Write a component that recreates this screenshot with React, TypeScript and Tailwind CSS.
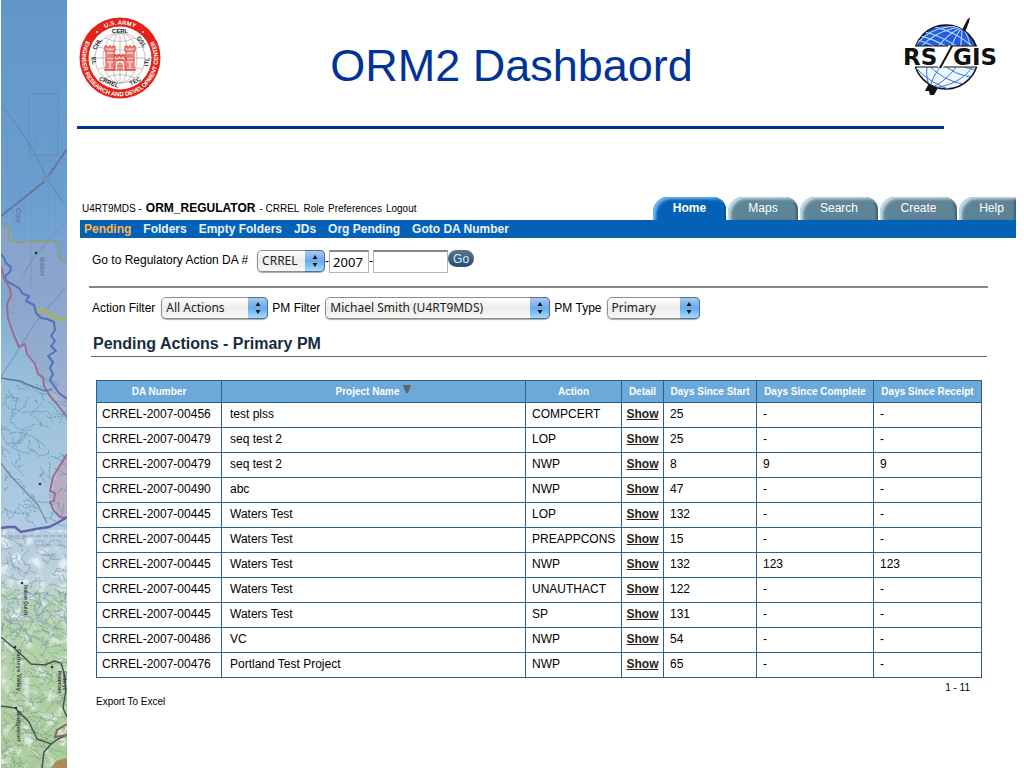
import { useState } from "react";
import type { ReactNode } from "react";
import { clsx } from "clsx";

const TABS = [
  { label: "Home", width: "w-[73px]" },
  { label: "Maps", width: "w-[70px]" },
  { label: "Search", width: "w-[78px]" },
  { label: "Create", width: "w-[77px]" },
  { label: "Help", width: "w-[57px]" },
];

const NAV = ["Pending", "Folders", "Empty Folders", "JDs", "Org Pending", "Goto DA Number"];

const COLUMNS = [
  { label: "DA Number", width: "w-[125px]" },
  { label: "Project Name", width: "w-auto", sorted: true },
  { label: "Action", width: "w-[96px]" },
  { label: "Detail", width: "w-[42px]" },
  { label: "Days Since Start", width: "w-[93px]" },
  { label: "Days Since Complete", width: "w-[117px]" },
  { label: "Days Since Receipt", width: "w-[108px]" },
];

// da number, project, action, days since start / complete / receipt
const ROWS = [
  ["CRREL-2007-00456", "test plss", "COMPCERT", "25", "-", "-"],
  ["CRREL-2007-00479", "seq test 2", "LOP", "25", "-", "-"],
  ["CRREL-2007-00479", "seq test 2", "NWP", "8", "9", "9"],
  ["CRREL-2007-00490", "abc", "NWP", "47", "-", "-"],
  ["CRREL-2007-00445", "Waters Test", "LOP", "132", "-", "-"],
  ["CRREL-2007-00445", "Waters Test", "PREAPPCONS", "15", "-", "-"],
  ["CRREL-2007-00445", "Waters Test", "NWP", "132", "123", "123"],
  ["CRREL-2007-00445", "Waters Test", "UNAUTHACT", "122", "-", "-"],
  ["CRREL-2007-00445", "Waters Test", "SP", "131", "-", "-"],
  ["CRREL-2007-00486", "VC", "NWP", "54", "-", "-"],
  ["CRREL-2007-00476", "Portland Test Project", "NWP", "65", "-", "-"],
];

// small repeatable generator so the creeks on the map never move
function makeCreeks(count: number, top: number, bottom: number, seed: number) {
  let s = seed;
  const rnd = () => {
    s = (s * 16807) % 2147483647;
    return s / 2147483647;
  };
  return Array.from({ length: count }, () => {
    let x = rnd() * 66;
    let y = top + rnd() * (bottom - top);
    let d = `M${x.toFixed(1)} ${y.toFixed(1)}`;
    const dir = rnd() * 2 - 1;
    for (let i = 0; i < 5; i++) {
      x += dir * 4 + rnd() * 4 - 1;
      y += rnd() * 6 - 1.5;
      d += `L${x.toFixed(1)} ${y.toFixed(1)}`;
    }
    return d;
  });
}

const BLUE_CREEKS = makeCreeks(90, 375, 525, 71);
const GREY_CREEKS = makeCreeks(100, 535, 640, 911);
const HILL_CREEKS = makeCreeks(150, 590, 765, 3307);

function MapStrip() {
  return (
    <svg
      viewBox="0 0 66 768"
      preserveAspectRatio="xMidYMid slice"
      className="absolute inset-0 h-full w-full"
      aria-hidden="true"
    >
      <defs>
        <linearGradient id="sky" x1="0" y1="0" x2="0" y2="1">
          <stop offset="0" stopColor="#6296cb" />
          <stop offset="0.25" stopColor="#6c9fcf" />
          <stop offset="0.38" stopColor="#7ea9d2" />
          <stop offset="0.5" stopColor="#98bfdc" />
          <stop offset="0.68" stopColor="#b0cbe2" />
          <stop offset="0.75" stopColor="#bdd2da" />
          <stop offset="0.83" stopColor="#b4d2ac" />
          <stop offset="1" stopColor="#a9c79a" />
        </linearGradient>
        <pattern id="survey" width="6" height="6" patternUnits="userSpaceOnUse">
          <path d="M6 0H0V6" fill="none" stroke="#5286b8" strokeWidth="0.5" opacity="0.45" />
        </pattern>
        <filter id="relief" x="0" y="0" width="1" height="1">
          <feTurbulence type="fractalNoise" baseFrequency="0.09" numOctaves="5" seed="8" />
          <feColorMatrix values="0 0 0 0 0.88  0 0 0 0 0.92  0 0 0 0 0.92  4 0 0 0 -2" />
        </filter>
        <filter id="woods" x="0" y="0" width="1" height="1">
          <feTurbulence type="fractalNoise" baseFrequency="0.08" numOctaves="5" seed="21" />
          <feColorMatrix values="0 0 0 0 0.42  0 0 0 0 0.65  0 0 0 0 0.36  0 5 0 0 -2.4" />
        </filter>
      </defs>

      <rect width="66" height="768" fill="url(#sky)" />
      <rect y="130" width="66" height="190" fill="url(#survey)" />
      <path
        d="M0 228L9 228L13 240L50 241L60 259L66 262V410L56 396L46 385L38 378L35 367L24 348L13 330L8 305L8 290L0 262Z"
        fill="#98a3c9"
        opacity="0.6"
      />
      <path d="M66 454L57 470L50 495L57 517L66 518Z" fill="#bda5ba" opacity="0.8" />
      <path d="M42 384L66 413V380Z" fill="#b1a7cd" opacity="0.5" />
      <rect y="530" width="66" height="238" filter="url(#relief)" opacity="0.75" />
      <rect y="590" width="66" height="178" filter="url(#woods)" opacity="0.7" />

      <g fill="none" stroke="#6785b6" opacity="0.75">
        <rect x="28" y="94" width="29" height="61" />
        <path d="M34 100V150M38 98V134M47 99V128M51 104V148" strokeDasharray="2 1" opacity="0.6" />
      </g>
      <g fill="none" stroke="#65759e">
        <path d="M0 106C22 129 34 154 45 177L65 207" opacity="0.7" />
        <path d="M0 216L44 181L66 149" strokeWidth="2" />
        <path d="M0 160H66M12 160V223M30 240V290" stroke="#7894b7" opacity="0.7" />
        <path d="M66 222L35 254L22 275M66 286L34 323L0 377" stroke="#788baf" />
        <circle cx="45" cy="178" r="4" fill="#7690b9" stroke="none" />
      </g>
      <path d="M0 227L8 228L8 240L17 242L48 241L57 243L58 257L61 261L66 262" fill="none" stroke="#8f9f80" strokeWidth="2" />
      <path d="M34 309L45 312L54 318L66 319" fill="none" stroke="#9fae82" strokeWidth="5" />
      <path
        d="M0 254L3 258L5 263L10 267L9 272L4 276L5 281L11 284L18 288L22 294L28 296L25 301L33 305L35 313L40 318L46 319L53 322L54 330L50 336L54 341L50 346L55 351L47 356L52 362L49 368L52 374L49 380L53 386L58 393L66 399"
        fill="none"
        stroke="#5272bd"
        strokeWidth="2"
        strokeLinejoin="round"
      />
      <path
        d="M0 266L3 278L9 289L10 296L6 304L7 318L12 333L18 347L24 344L26 354L34 364L37 374L42 377L43 386L49 396L56 404L66 417M66 454L58 467L52 477L49 491L54 493L53 501L49 502L53 511L59 517L66 518"
        fill="none"
        stroke="#9f6c8e"
        strokeWidth="2"
        strokeLinejoin="round"
      />
      <path d="M0 378L18 381L33 387L44 391L51 389" fill="none" stroke="#597790" strokeWidth="1.5" />

      <g fill="none" stroke="#4e91a5" strokeWidth="0.9" strokeDasharray="3 1" opacity="0.75">
        {BLUE_CREEKS.map((d) => <path key={d} d={d} />)}
      </g>
      <g fill="none" stroke="#7691ac" strokeWidth="0.8" opacity="0.75">
        {GREY_CREEKS.map((d) => <path key={d} d={d} />)}
      </g>
      <g fill="none" stroke="#66917a" strokeWidth="0.8" strokeDasharray="3 1" opacity="0.75">
        {HILL_CREEKS.map((d) => <path key={d} d={d} />)}
      </g>

      <path d="M0 463L8 474L22 489L37 505L46 523" fill="none" stroke="#758ba0" strokeWidth="1.3" />
      <path d="M0 528L7 527L14 527L20 532L35 529L48 527L58 522L66 517" fill="none" stroke="#6462a9" strokeWidth="2.5" />
      <path d="M0 536H66" stroke="#8699ad" strokeDasharray="5 2" />
      <g fill="none" stroke="#465451" strokeWidth="1.5">
        <path d="M0 637L13 648L24 658L30 664L44 665L53 661L60 663L63 673L65 690L62 708L66 717" />
        <path d="M0 706L14 708L28 722L36 739L50 744L57 739L66 735M50 744L43 752L41 768" />
        <path d="M66 724L56 730L54 737L66 735" stroke="#8c6454" strokeWidth="2" />
      </g>
      <path d="M50 768L55 761L66 758V768Z" fill="#ab8c5a" />
      <g fill="#263532">
        <circle cx="21" cy="583" r="1.3" />
        <circle cx="14" cy="647" r="1.3" />
        <circle cx="51" cy="667" r="1.3" />
        <circle cx="15" cy="708" r="1.3" />
        <circle cx="39" cy="484" r="1.3" />
        <circle cx="35" cy="253" r="1.3" />
      </g>
      <g fill="#35443f" fontFamily="Liberation Sans, sans-serif" fontWeight="bold">
        <text transform="translate(23 585) rotate(90)" fontSize="5">Indian Gulch</text>
        <text transform="translate(16 649) rotate(90)" fontSize="6">Catheys Valley</text>
        <text transform="translate(16 711) rotate(90)" fontSize="6">Bridgeport</text>
        <text transform="translate(62 671) rotate(90)" fontSize="5">Catheys</text>
        <text transform="translate(57 671) rotate(90)" fontSize="5">Mountain</text>
        <text transform="translate(15 208) rotate(90)" fontSize="7" fill="#607fa7">Cole</text>
        <text transform="translate(39 257) rotate(90)" fontSize="7" fill="#6d7ca0">Baker</text>
      </g>
    </svg>
  );
}

function ArmySeal() {
  return (
    <svg viewBox="0 0 82 82" className="h-[82px] w-[82px]" role="img" aria-label="Engineer Research and Development Center">
      <defs>
        <path id="sealTop" d="M7.5 41A33.5 33.5 0 0 1 74.5 41" />
        <path id="sealBottom" d="M10.6 18.5A38 38 0 1 0 71.4 18.5" />
      </defs>
      <circle cx="41" cy="41" r="40.5" fill="#e2231a" />
      <circle cx="41" cy="41" r="31.5" fill="#fff" />
      <g fill="none" stroke="#a8a8a8" strokeWidth="0.7">
        <circle cx="41" cy="41" r="25" />
        <ellipse cx="41" cy="41" rx="17" ry="25" />
        <ellipse cx="41" cy="41" rx="8" ry="25" />
        <path d="M41 16V66M16 41H66M19 30Q41 36 63 30M19 52Q41 46 63 52M26 21Q41 28 56 21M26 61Q41 54 56 61" />
      </g>
      {/* castle */}
      <g fill="#f7c4bd" stroke="#df3026" strokeWidth="0.9">
        <path d="M27 53V34H26V29H28V31H30V29H32V31H34V29H36V34H35V38H47V34H46V29H48V31H50V29H52V31H54V29H56V34H55V53H46V48A5 5 0 0 0 36 48V53Z" />
        <path d="M35 41V38H37V40H39V38H41V40H43V38H45V40H47V42M26 34H36M46 34H56M27 43H55M35 38V53M47 38V53" fill="none" />
        <path d="M29 37V41M31 37V41M33 37V41M49 37V41M51 37V41M53 37V41M29 46V51M33 46V51M49 46V51M53 46V51M39 46V53M41 45V53M43 46V53M25 53H57" fill="none" />
      </g>
      <g fontFamily="Liberation Sans, sans-serif" fontWeight="bold" textAnchor="middle">
        <text fill="#fff" fontSize="6">
          <textPath href="#sealTop" startOffset="50%">U.S. ARMY</textPath>
        </text>
        <text fill="#fff" fontSize="6">
          <textPath href="#sealBottom" startOffset="50%">ENGINEER RESEARCH AND DEVELOPMENT CENTER</textPath>
        </text>
        <g fontSize="6" fill="#222">
          <text x="41" y="16">CERL</text>
          <text transform="translate(20 28) rotate(-58)">CHL</text>
          <text transform="translate(61 26) rotate(54)">GSL</text>
          <text transform="translate(13 44) rotate(80)">EL</text>
          <text transform="translate(70 45) rotate(-82)">ITL</text>
          <text transform="translate(29 67) rotate(22)">CRREL</text>
          <text transform="translate(57 66) rotate(-28)">TEC</text>
        </g>
      </g>
      <circle cx="18" cy="15" r="1" fill="#fff" />
      <circle cx="64" cy="15" r="1" fill="#fff" />
    </svg>
  );
}

function RsGisLogo() {
  return (
    <svg viewBox="0 0 100 82" className="h-[82px] w-[100px]" role="img" aria-label="RS/GIS">
      <defs>
        <clipPath id="north"><path d="M0 0H100V29H0Z" /></clipPath>
        <clipPath id="south"><path d="M0 50H100V82H0Z" /></clipPath>
        <clipPath id="globe"><circle cx="46" cy="40" r="32" /></clipPath>
      </defs>
      <path d="M62 13L67 3L70 0L69 5L65 15Z" fill="#111" />
      <path d="M34 67L29 66L25 74L29 74L30 78L34 78L39 69Z" fill="#111" />
      <g clipPath="url(#north)">
        <circle cx="46" cy="40" r="32" fill="#235ddd" stroke="#111" strokeWidth="1.5" />
        <g clipPath="url(#globe)" fill="none" stroke="#b8daff" strokeWidth="1.1">
          <path d="M62 10C42 12 25 22 15 38M62 10C50 16 38 26 31 42M62 10C56 18 50 29 48 42M62 10C62 22 60 30 60 42M62 10C70 20 70 28 70 40M62 10C36 7 22 20 14 30" />
          <path d="M18 23Q44 31 65 50M25 15Q52 22 77 45M35 10Q60 16 80 36M12 31Q32 37 45 48M21 19Q48 26 71 48" />
        </g>
      </g>
      <g clipPath="url(#south)">
        <circle cx="46" cy="40" r="32" fill="#eef8ff" stroke="#111" strokeWidth="1.5" />
        <g clipPath="url(#globe)" fill="none" stroke="#3b70d8" strokeWidth="1">
          <path d="M30 71C20 63 16 55 14 45M30 71C32 61 38 52 45 44M30 71C43 66 52 57 60 44M30 71C52 70 67 60 77 44M30 71C26 62 26 53 28 44" />
          <path d="M14 49Q30 67 54 74M25 44Q42 65 68 68M40 44Q55 60 76 60M57 44Q66 54 79 52" />
        </g>
      </g>
      <path d="M15 29H77M15 50H77" stroke="#111" />
      <g fill="#111" fontFamily="DejaVu Sans, sans-serif" fontWeight="bold" fontSize="23">
        <text x="3" y="48">RS</text>
        <text x="53" y="48">GIS</text>
      </g>
      <path d="M40 51L51 29" stroke="#fff" strokeWidth="5" />
      <path d="M40 51L52 29" stroke="#111" strokeWidth="2" />
    </svg>
  );
}

function PopupSelect({ id, width, options }: { id: string; width: string; options: string[] }) {
  return (
    <span className={clsx("relative inline-block h-[22px]", width)}>
      <select
        id={id}
        className="h-full w-full appearance-none rounded-[5px] border border-[#8d8d8d] bg-linear-to-b from-white via-[#ececec] to-[#f8f8f8] pl-1 font-['Noto_Sans',sans-serif] text-[12px] leading-[18px] text-[#222] shadow-[0_1px_1px_#aaa]"
      >
        {options.map((option) => <option key={option}>{option}</option>)}
      </select>
      <span className="pointer-events-none absolute inset-y-0 right-0 flex w-5 items-center justify-center rounded-r-[5px] border border-l-0 border-[#536d9e] bg-linear-to-b from-[#a7c9f0] via-[#68a9ea] to-[#a4dcff]">
        <svg viewBox="0 0 8 12" className="h-3 w-2" aria-hidden="true">
          <path d="M4 0L6.5 4H1.5ZM4 12L1.5 8H6.5Z" fill="#101820" />
        </svg>
      </span>
    </span>
  );
}

function Cell({ children }: { children: ReactNode }) {
  return <td className="border border-[#2b5f8d] px-[6px] pb-[2px]">{children}</td>;
}

export default function App() {
  const [tab, setTab] = useState("Home");
  const [section, setSection] = useState("Pending");

  return (
    <div className="flex min-h-screen bg-white font-['Liberation_Sans',Arial,sans-serif] text-[12px] leading-4 text-black">
      <aside className="relative ml-px w-[66px] shrink-0 overflow-hidden">
        <MapStrip />
      </aside>

      <div className="min-w-0 flex-1 pr-2">
        <header className="ml-[10px] mr-[72px] flex h-[129px] items-start border-b-3 border-[#003399]">
          <div className="ml-[2px] mt-[17px]"><ArmySeal /></div>
          <h1 className="mt-[39px] flex-1 pr-[38px] text-center text-[45px] leading-[54px] text-[#003399]">ORM2 Dashbaord</h1>
          <div className="-mr-[56px] mt-[17px]"><RsGisLogo /></div>
        </header>

        <div className="ml-[13px] mt-[67px]">
          <div className="flex h-6 items-end justify-between">
            <p className="mb-[3px] ml-[2px] flex items-baseline gap-1 whitespace-nowrap text-[10px]">
              <span>U4RT9MDS -</span>
              <strong className="text-[12px]">ORM_REGULATOR</strong>
              <span>- CRREL</span>
              <a href="#role">Role</a>
              <a href="#preferences">Preferences</a>
              <a href="#logout">Logout</a>
            </p>
            <div className="flex gap-[2px]">
              {TABS.map(({ label, width }) => (
                <button
                  key={label}
                  onClick={() => setTab(label)}
                  className={clsx(
                    "h-[23px] rounded-tl-[15px] pb-px text-[12px] text-white last:pl-2",
                    label === "Help" ? "rounded-tr-none" : "rounded-tr-[13px]",
                    width,
                    tab === label
                      ? "bg-[#0362b6] font-bold shadow-[inset_3px_2px_3px_#76b7ee,inset_-1px_0_1px_#064b8b]"
                      : "bg-[#5d8497] shadow-[inset_3px_2px_3px_#c8dce5,inset_-2px_0_2px_#3d6274]",
                  )}
                >
                  {label}
                </button>
              ))}
            </div>
          </div>

          <nav className="flex h-[18px] items-center gap-3 bg-[#0362b6] pl-1 font-bold">
            {NAV.map((item) => (
              <a
                key={item}
                href={`#${item}`}
                onClick={() => setSection(item)}
                className={section === item ? "text-[#ffb546]" : "text-[#eaf4ff]"}
              >
                {item}
              </a>
            ))}
          </nav>

          <form className="ml-3 mt-3 flex h-6 items-start" onSubmit={(e) => e.preventDefault()}>
            <label htmlFor="district" className="mr-[9px] mt-[2px]">Go to Regulatory Action DA #</label>
            <PopupSelect id="district" width="w-[68px]" options={["CRREL"]} />
            <span className="mt-[3px]">-</span>
            <input
              aria-label="Year"
              defaultValue="2007"
              className="h-[23px] w-10 border border-t-2 border-[#b5b5b5] border-t-[#888] pl-[3px] font-['Noto_Sans',sans-serif] text-[13px]"
            />
            <span className="mt-[3px]">-</span>
            <input
              aria-label="Sequence number"
              className="h-[23px] w-[75px] border border-t-2 border-[#b5b5b5] border-t-[#888] px-1 text-[12px]"
            />
            <button className="h-[17px] w-[26px] rounded-full bg-linear-to-b from-[#56758f] to-[#284d70] text-[12px] leading-4 text-[#dceefa]">
              Go
            </button>
          </form>

          <hr className="ml-[9px] mr-7 mt-[12px] border-t-2 border-[#858585]" />

          <div className="ml-3 mt-[9px] flex h-[22px] items-center">
            <label htmlFor="action" className="mr-[6px]">Action Filter</label>
            <PopupSelect id="action" width="w-[107px]" options={["All Actions"]} />
            <label htmlFor="pm" className="ml-[4px] mr-[5px]">PM Filter</label>
            <PopupSelect id="pm" width="w-[225px]" options={["Michael Smith (U4RT9MDS)"]} />
            <label htmlFor="pm-type" className="ml-[4px] mr-[5px]">PM Type</label>
            <PopupSelect id="pm-type" width="w-[93px]" options={["Primary", "Secondary"]} />
          </div>

          <h2 className="ml-[11px] mr-[29px] mt-[14px] h-[24px] border-b border-[#4d7465] pl-[2px] text-[16px] font-bold leading-[22px] text-[#182b3d]">
            Pending Actions - Primary PM
          </h2>

          <div className="ml-4 mr-[34px] mt-[23px]">
            <table className="w-full table-fixed border-collapse">
              <thead>
                <tr className="h-[22px] bg-[#6ba9da] text-[10px] text-white">
                  {COLUMNS.map(({ label, width, sorted }) => (
                    <th key={label} scope="col" className={clsx("whitespace-nowrap border border-[#2b5f8d] font-bold leading-4", width)}>
                      {label}
                      {sorted && (
                        <svg viewBox="0 0 8 8" className="ml-1 inline h-2 w-2 align-[2px]" aria-hidden="true">
                          <path d="M0 0H8L5 8H3Z" fill="#5d6468" />
                        </svg>
                      )}
                    </th>
                  ))}
                </tr>
              </thead>
              <tbody>
                {ROWS.map(([da, project, action, start, complete, receipt], i) => (
                  <tr key={i} className="h-[25px]">
                    <td className="whitespace-nowrap border border-[#2b5f8d] px-[5px] pb-[2px]">{da}</td>
                    <td className="border border-[#2b5f8d] px-2 pb-[2px]">{project}</td>
                    <Cell>{action}</Cell>
                    <td className="border border-[#2b5f8d] pb-[2px] text-center">
                      <a href={`#${da}`} className="font-bold text-[#222] underline">Show</a>
                    </td>
                    <Cell>{start}</Cell>
                    <Cell>{complete}</Cell>
                    <Cell>{receipt}</Cell>
                  </tr>
                ))}
              </tbody>
            </table>
            <p className="mr-3 mt-[2px] text-right text-[10px]">1 - 11</p>
            <a href="#export" className="block w-fit text-[10px] leading-3">Export To Excel</a>
          </div>
        </div>
      </div>
    </div>
  );
}
